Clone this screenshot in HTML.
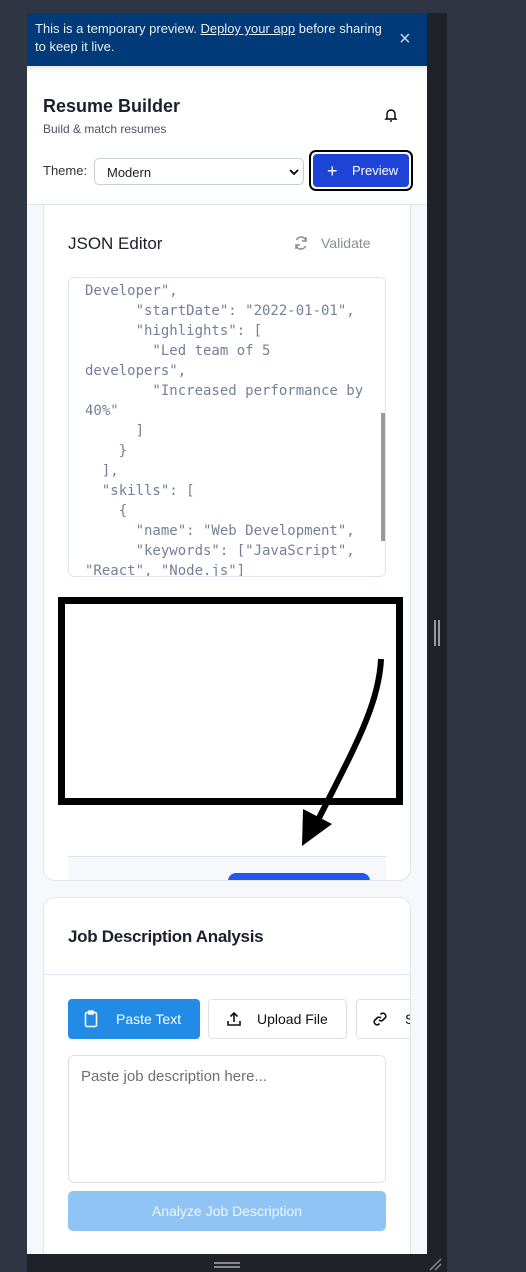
<!DOCTYPE html>
<html><head><meta charset="utf-8"><style>
*{box-sizing:border-box;margin:0;padding:0}
body{width:526px;height:1272px;background:#2f3542;position:relative;overflow:hidden;font-family:"Liberation Sans",sans-serif}
.a{position:absolute}
</style></head><body>
<div class="a" style="left:27px;top:13px;width:420px;height:1259px;background:#1f2228"></div>
<div class="a" style="left:434px;top:620px;width:2px;height:26px;background:#999"></div>
<div class="a" style="left:438px;top:620px;width:2px;height:26px;background:#999"></div>
<div class="a" style="left:27px;top:13px;width:400px;height:1241px;background:#f6f8fc;overflow:hidden">
  <div class="a" style="left:0;top:0;width:400px;height:53px;background:#003a78;color:#e8eef6;font-size:13px;line-height:18px;padding:7px 8px">This is a temporary preview. <u>Deploy your app</u> before sharing<br>to keep it live.</div>
  <div class="a" style="left:372px;top:16px;color:#c9d5e6;font-size:20px;line-height:20px">×</div>
  <div class="a" style="left:0;top:53px;width:400px;height:139px;background:#fff;border-bottom:1px solid #dde3ec;box-shadow:inset 0 8px 6px -6px rgba(0,0,0,.12)"></div>
  <div class="a" style="left:16px;top:83px;font-size:18px;font-weight:bold;color:#1a202c">Resume Builder</div>
  <div class="a" style="left:16px;top:109px;font-size:12px;color:#4a5568">Build &amp; match resumes</div>
  <svg class="a" style="left:356px;top:94px" width="16" height="16" viewBox="0 0 16 16" fill="none" stroke="#000" stroke-width="1.4"><path d="M4 11V7a4 4 0 0 1 8 0v4l1 1H3z"/><path d="M7 14h2"/></svg>
  <div class="a" style="left:16px;top:150px;font-size:13px;color:#333">Theme:</div>
  <div class="a" style="left:67px;top:145px;width:210px;height:27px;border:1px solid #c5cfdc;border-radius:5px;font-size:13px;padding:6px 12px;color:#222">Modern</div>
  <svg class="a" style="left:262px;top:155px" width="10" height="8" viewBox="0 0 10 8"><path d="M1 2l4 4 4-4" stroke="#000" stroke-width="1.8" fill="none"/></svg>
  <div class="a" style="left:282px;top:137px;width:104px;height:41px;border:2px solid #000;border-radius:7px;background:#fff;padding:2px"><div style="width:96px;height:33px;background:#1d44d6;border-radius:4px;color:#fff;font-size:13px;line-height:33px;padding-left:14px"><span style="font-size:18px;vertical-align:-2px">+</span>&nbsp;&nbsp;&nbsp; Preview</div></div>

  <div class="a" style="left:16px;top:192px;width:368px;height:676px;background:#fff;border:1px solid #e0e6ee;border-top:none;border-radius:0 0 12px 12px;overflow:hidden">
    <div class="a" style="left:24px;top:29px;font-size:17px;color:#1a202c">JSON Editor</div>
    <svg class="a" style="left:249px;top:30px" width="16" height="16" viewBox="0 0 16 16" fill="none" stroke="#888" stroke-width="1.5"><path d="M13 6A5 5 0 0 0 3.5 5M3 10a5 5 0 0 0 9.5 1"/><path d="M13 2v4h-4M3 14v-4h4"/></svg>
    <div class="a" style="left:277px;top:30px;font-size:14px;color:#8a8f98">Validate</div>
    <div class="a" style="left:24px;top:72px;width:318px;height:300px;border:1px solid #e0e6ee;border-radius:6px;overflow:hidden">
      <pre style="font-family:'DejaVu Sans Mono',monospace;font-size:14px;line-height:20px;color:#74809a;padding:3px 0 0 16px;margin-top:0">Developer",
      "startDate": "2022-01-01",
      "highlights": [
        "Led team of 5
developers",
        "Increased performance by
40%"
      ]
    }
  ],
  "skills": [
    {
      "name": "Web Development",
      "keywords": ["JavaScript",
"React", "Node.js"]</pre>
      <div class="a" style="left:312px;top:135px;width:4px;height:128px;background:#999"></div>
    </div>
    <div class="a" style="left:24px;top:651px;width:318px;height:30px;background:#f6f8fc;border-top:1px solid #dde3ec"></div>
    <div class="a" style="left:184px;top:668px;width:142px;height:20px;background:#2358e8;border-radius:8px 8px 0 0"></div>
  </div>
  <svg class="a" style="left:0;top:0" width="400" height="900">
    <rect x="34.5" y="587.5" width="338" height="201" fill="none" stroke="#000" stroke-width="7"/>
    <path d="M354 646 C352 690 330 730 292 805" stroke="#000" stroke-width="6" fill="none"/>
    <path d="M276 796 L305 811 L275 833 Z" fill="#000"/>
  </svg>

  <div class="a" style="left:16px;top:884px;width:368px;height:370px;background:#fff;border:1px solid #e0e6ee;border-radius:12px;overflow:hidden">
    <div class="a" style="left:24px;top:29px;font-size:17px;font-weight:bold;color:#1a202c;letter-spacing:-.3px">Job Description Analysis</div>
    <div class="a" style="left:0;top:76px;width:368px;border-top:1px solid #e0e6ee"></div>
    <div class="a" style="left:24px;top:101px;width:132px;height:40px;background:#228be6;border-radius:4px;color:#fff;font-size:14px;line-height:40px;padding-left:48px">Paste Text</div>
    <svg class="a" style="left:40px;top:112px" width="14" height="18" viewBox="0 0 14 18" fill="none" stroke="#fff" stroke-width="1.5"><rect x="1.5" y="2.5" width="11" height="14" rx="1.5"/><rect x="4.5" y="1" width="5" height="3" rx="1"/></svg>
    <div class="a" style="left:164px;top:101px;width:139px;height:40px;border:1px solid #dde1e6;border-radius:4px;color:#111;font-size:14px;line-height:38px;padding-left:48px">Upload File</div>
    <svg class="a" style="left:182px;top:113px" width="16" height="16" viewBox="0 0 16 16" fill="none" stroke="#111" stroke-width="1.6"><path d="M8 11V2M4.5 5.5L8 2l3.5 3.5M2 10v4h12v-4"/></svg>
    <div class="a" style="left:312px;top:101px;width:80px;height:40px;border:1px solid #dde1e6;border-radius:4px;color:#111;font-size:14px;line-height:38px;padding-left:48px">S</div>
    <svg class="a" style="left:328px;top:113px" width="16" height="16" viewBox="0 0 16 16" fill="none" stroke="#111" stroke-width="1.6"><path d="M7 9a3 3 0 0 0 4 0l2.5-2.5a3 3 0 0 0-4-4L8.5 3.5M9 7a3 3 0 0 0-4 0L2.5 9.5a3 3 0 0 0 4 4l1-1"/></svg>
    <div class="a" style="left:24px;top:157px;width:318px;height:128px;border:1px solid #dde1e6;border-radius:6px;font-size:15px;color:#6e6e6e;padding:12px 12px">Paste job description here...</div>
    <div class="a" style="left:24px;top:293px;width:318px;height:40px;background:#90c4f5;border-radius:5px;color:#eef6ff;font-size:14px;line-height:40px;text-align:center">Analyze Job Description</div>
  </div>
</div>
<div class="a" style="left:214px;top:1262px;width:26px;height:2px;background:#888"></div>
<div class="a" style="left:214px;top:1266px;width:26px;height:2px;background:#888"></div>
<svg class="a" style="left:428px;top:1257px" width="16" height="14"><path d="M2 13L13 2M7 13L13 7" stroke="#888" stroke-width="1.5"/></svg>
</body></html>
